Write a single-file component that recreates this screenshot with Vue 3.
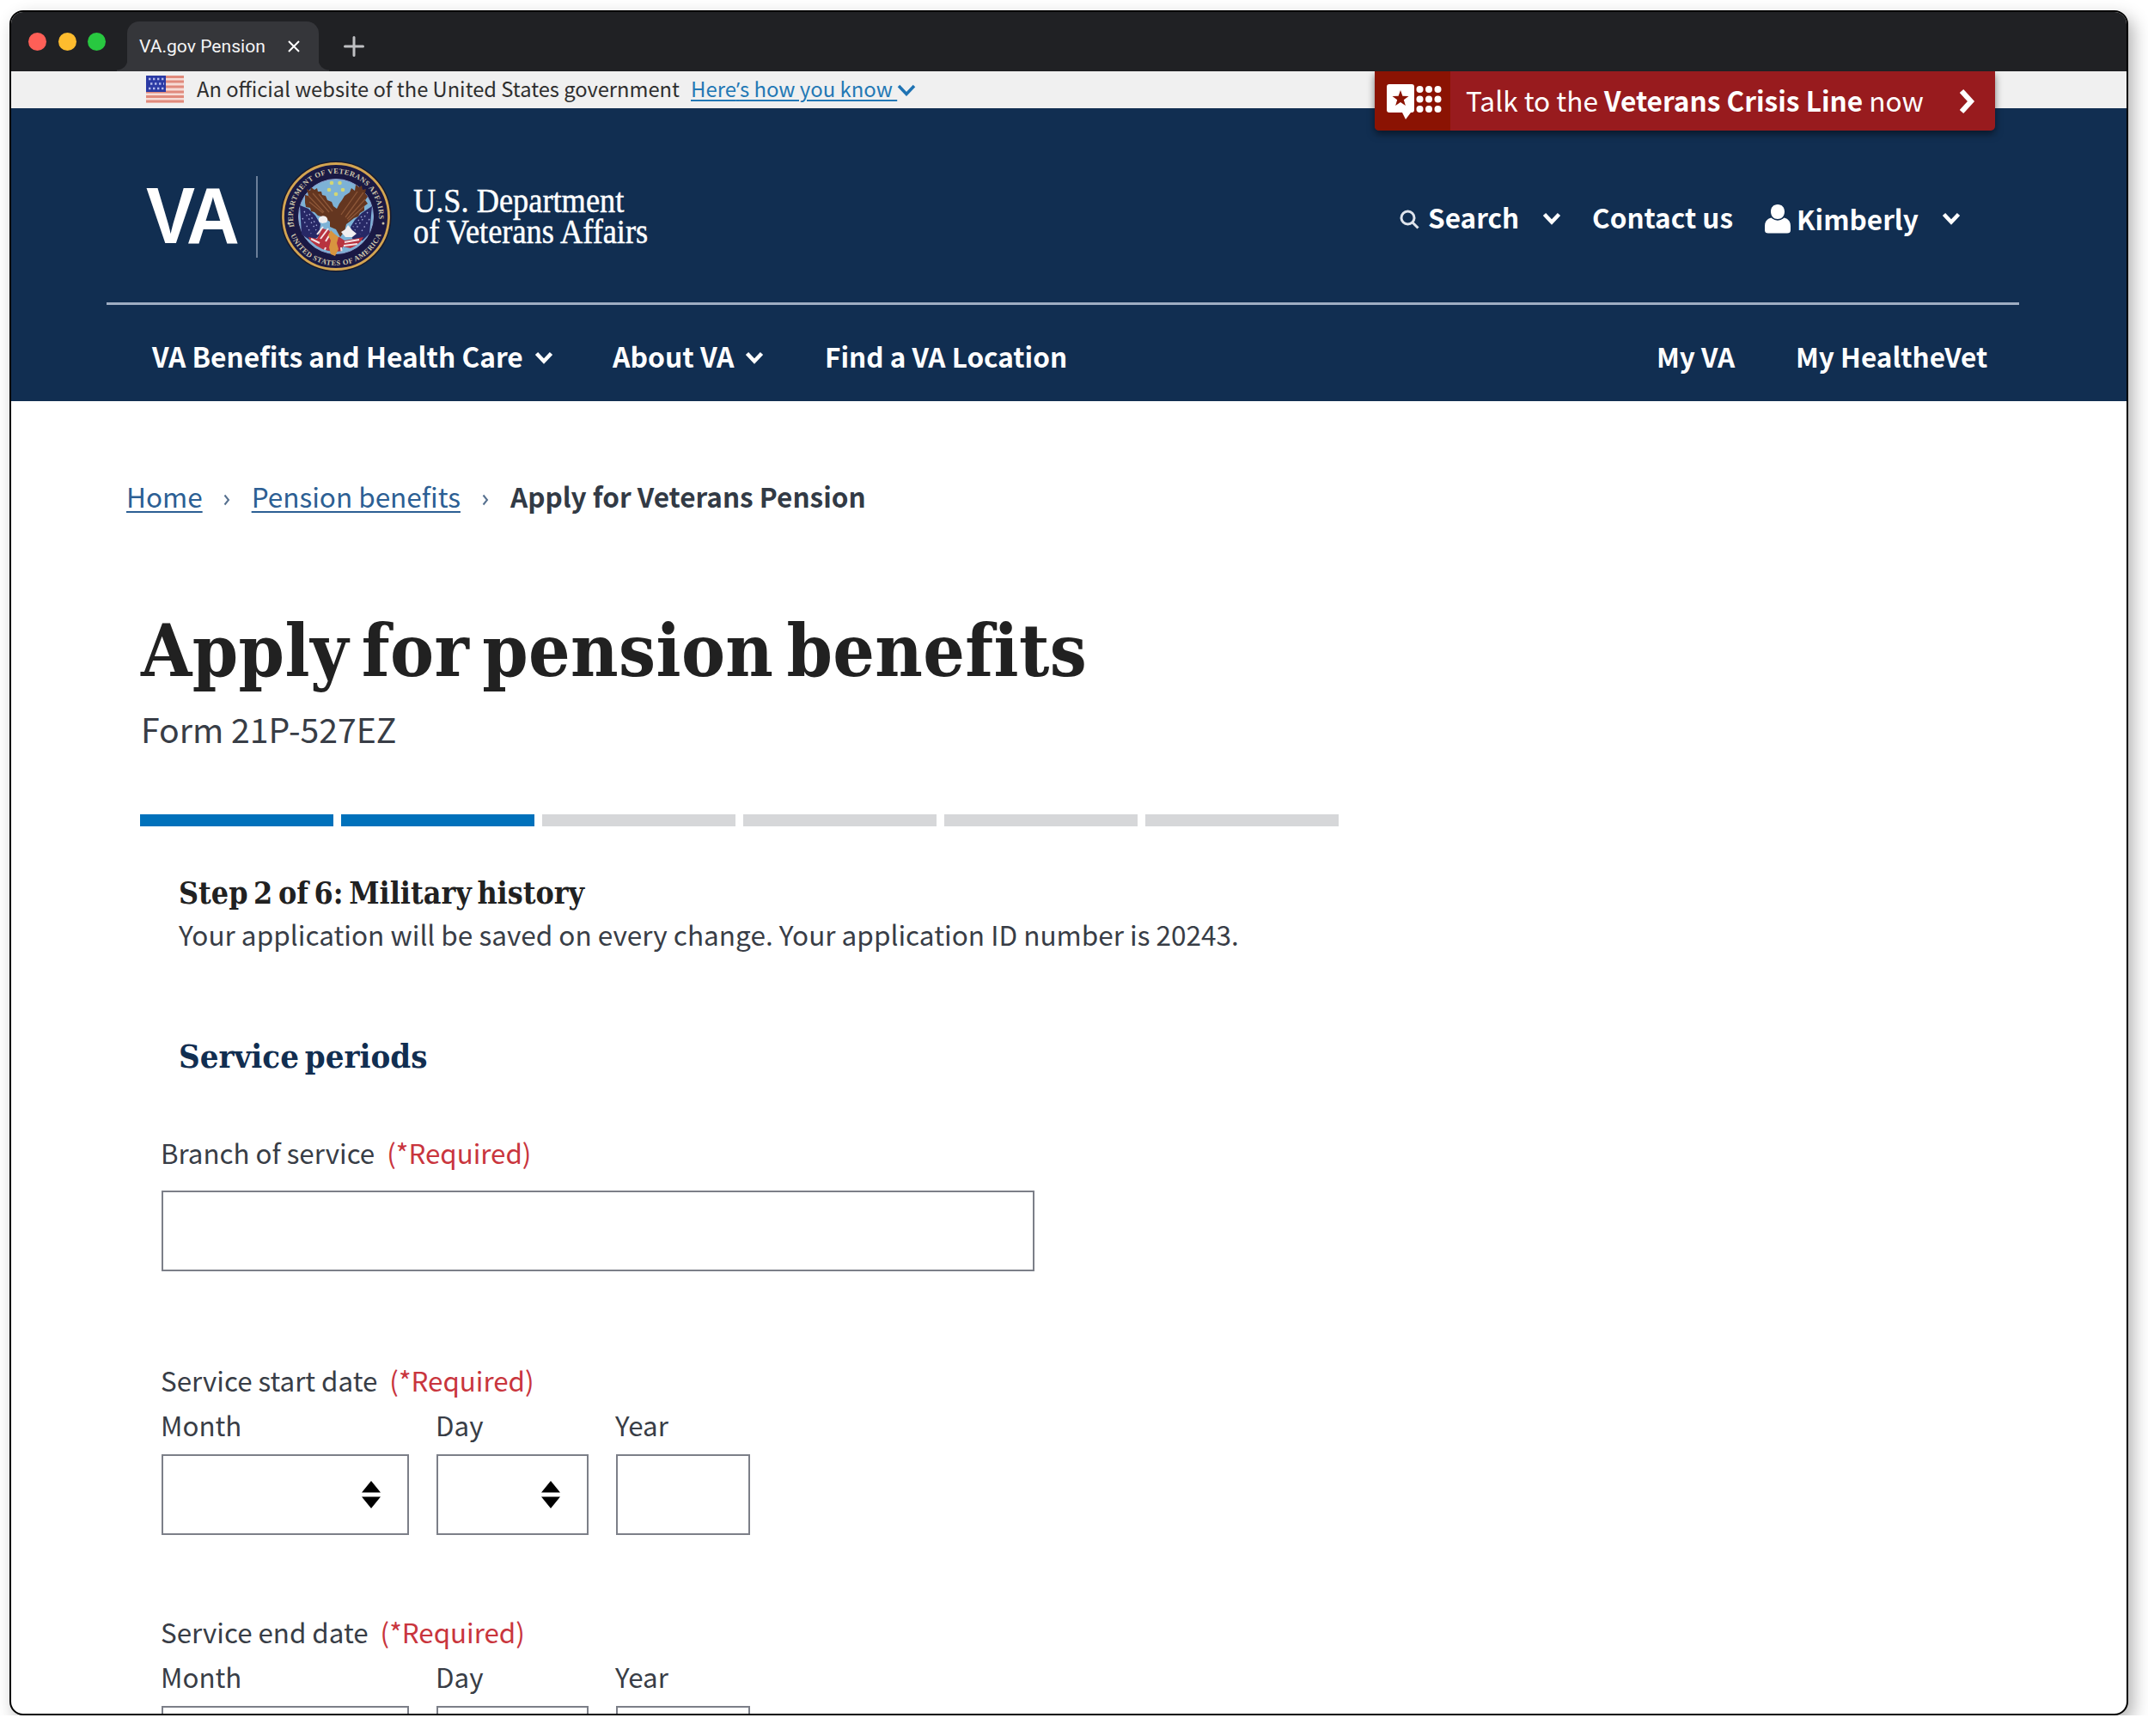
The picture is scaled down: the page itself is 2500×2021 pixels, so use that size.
<script setup>
const steps = [true, true, false, false, false, false]
const dates = ['Service start date', 'Service end date']
</script>

<template>
  <div class="window">
    <div class="tabbar">
      <i class="dot red"></i><i class="dot amber"></i><i class="dot green"></i>
      <div class="tab">
        <span class="tab-title">VA.gov Pension</span>
        <svg class="tab-x" viewBox="0 0 14 14"><path d="M1 1 13 13M13 1 1 13" /></svg>
      </div>
      <svg class="plus" viewBox="0 0 24 24"><path d="M12 1.5v21M1.5 12h21" /></svg>
    </div>

    <div class="gov">
      <svg class="flag" viewBox="0 0 44 32">
        <rect width="44" height="32" fill="#f6dcd6" />
        <path d="M0 1.500h44M0 7h44M0 13h44M0 19h44M0 24.500h44M0 30h44" stroke="#e08a7c" stroke-width="2.800" />
        <rect width="23" height="19" fill="#2b3aa4" />
        <path d="M3 4h18M5 9.500h16M3 15h18" stroke="#b4bbec" stroke-width="2.400" stroke-dasharray="2.400 2.600" />
      </svg>
      <span class="gov-text">An official website of the United States government</span>
      <a class="gov-link">Here<span class="apos">’</span>s how you know </a>
      <svg class="gov-chev" viewBox="0 0 22 14"><path d="M2 2l9 9.500L20 2" /></svg>
    </div>

    <div class="crisis">
      <div class="crisis-icon">
        <svg viewBox="0 0 64 42">
          <path fill="#fff" d="M3 0h26q3 0 3 3v27q0 3-3 3h-1l-6 8-4-8H3q-3 0-3-3V3q0-3 3-3z" />
          <path fill="#8b1303" d="M16 7l2.400 6.800 7.100.1-5.700 4.300 2.100 6.900-5.900-4.100-5.900 4.100 2.100-6.900L6.500 13.900l7.100-.1z" />
          <g fill="#fff">
            <template v-for="y in 3" :key="y">
              <circle v-for="x in 3" :key="x" :cx="28 + x * 10.500" :cy="y * 11.500 - 5.500" r="4" />
            </template>
          </g>
        </svg>
      </div>
      <span class="crisis-text">Talk to the <b>Veterans Crisis Line</b> now</span>
      <svg class="crisis-chev" viewBox="0 0 20 30"><path d="M4 3l11 12L4 27" /></svg>
    </div>

    <header class="header">
      <div class="top">
        <div class="brand">
          <div class="va-box"><span class="va">VA</span></div>
          <i class="rule"></i>
          <svg class="seal" viewBox="-65 -65 130 130">
            <defs>
              <path id="arcTop" d="M-48.500 12A50 50 0 1 1 48.500 12" />
              <path id="arcBottom" d="M-55 15A57 57 0 0 0 55 15" />
              <clipPath id="disc"><circle r="41" /></clipPath>
            </defs>
            <circle r="64.500" fill="#191a2c" />
            <circle r="61.500" fill="#1a1944" stroke="#d3a552" stroke-width="2.800" />
            <circle r="43.500" fill="#7db2d6" stroke="#8c9ccb" stroke-width="1" />
            <text class="ring"><textPath href="#arcTop" textLength="172">DEPARTMENT OF VETERANS AFFAIRS</textPath></text>
            <text class="ring"><textPath href="#arcBottom" startOffset="7" textLength="135">UNITED STATES OF AMERICA</textPath></text>
            <circle cx="-55" cy="8" r="1.500" fill="#c9c2a8" />
            <circle cx="55" cy="8" r="1.500" fill="#c9c2a8" />
            <path fill="#272866" d="M-42-13l10 4 8 8 6 10-2 14-8 6-12-8zM42-12l-12 8-8 8-5 8 2 14 12 2 8-8z" />
            <path d="M-37-6l14 22M-39 2l10 18M-31-3l10 16M37-5L22 16M39 3L28 20M30 0L20 12" stroke="#a4a9d8" stroke-width="1.400" stroke-dasharray="1.500 3.500" />
            <g clip-path="url(#disc)">
              <path fill="#b8333f" d="M-32 24l10 2 6-12 8 2 4 8 8 0 6 4 12-2 10-2-5 9-10 4-9-2-2 7-4 4-2-8-8 8-6-4-1 6-2-6-10-5z" />
              <path d="M-22 21l7-9M-18 26l9-12M-12 29l6-10M-29 26l10 5M10 30l17-3M9 34l16-2M-12 36l-3 8M6 36l1 9" stroke="#f4e4e6" stroke-width="2" />
            </g>
            <path fill="#643620" d="M-36-25l4 1-2-8 4 2 1-4 4 3 3-2 1 4 4 0 1 4 4 1 2 5 5 2 2 5 4 3 3-6 3-4 3-5 6-4 2-5 4 3 1-7 4 3 3-2 1 5 4-1-1 5 3 4-3 4 3 4-4 3 0 5-5 3-2 4-5 2-5 4-4 3-2 8-5 7-5-9-7-3 0-6-5-3-5-3-4-1-4-4-4-1-1-4-5-1-1-5z" />
            <path d="M-32-24l18 19M-27-27l19 22M-31-17l16 13M-20-26L-4-6M32-28L11 1M25-29L6-2M34-20L13 3M33-12L14 5" stroke="#8d5738" stroke-width="1.300" />
            <path fill="#f1eef0" d="M-20 2q3-4 8-2 4 3 1 7l-5 1-4-2zM6 18l5-3 3-5 5 6 5 4-5 4-8 0z" />
            <path fill="#d8943f" d="M-9 22l3-6 4 4 5 4-2 7 2 7-4 8-5-2-2-8 2-8z" />
            <g fill="#d3d674"><circle cx="-5" cy="-39" r="2.300" /><circle cx="4.500" cy="-39" r="2.300" /><circle cx="-8" cy="-31" r="2.300" /><circle cx="8" cy="-31" r="2.300" /><circle cx="0" cy="-26" r="2.300" /></g>
          </svg>
          <div class="dept">
            <div>U.S. Department</div>
            <div>of Veterans Affairs</div>
          </div>
        </div>
        <div class="tools">
          <svg class="glass" viewBox="0 0 23 23"><circle cx="9.500" cy="9.500" r="7.500" /><path d="M15 15l6.500 6.500" /></svg>
          <span class="t-search">Search</span>
          <svg class="chev c1" viewBox="0 0 22 15"><path d="M2.500 2.500l8.500 9 8.500-9" /></svg>
          <span class="t-contact">Contact us</span>
          <svg class="person" viewBox="0 0 30 34"><path d="M15 0c5 0 8 3.500 8 8.500S19.500 17 15 17 7 13.500 7 8.500 10 0 15 0zM7.500 15.500Q15 22 22.500 15.500C27.500 16.500 30 20 30 25v5q0 3.500-4 3.500H4Q0 33.500 0 30v-5c0-5 2.500-8.500 7.500-9.500z" /></svg>
          <span class="t-name">Kimberly</span>
          <svg class="chev c2" viewBox="0 0 22 15"><path d="M2.500 2.500l8.500 9 8.500-9" /></svg>
        </div>
      </div>
      <nav class="nav">
        <span class="n1">VA Benefits and Health Care</span>
        <svg class="chev nc1" viewBox="0 0 22 15"><path d="M2.500 2.500l8.500 9 8.500-9" /></svg>
        <span class="n2">About VA</span>
        <svg class="chev nc2" viewBox="0 0 22 15"><path d="M2.500 2.500l8.500 9 8.500-9" /></svg>
        <span class="n3">Find a VA Location</span>
        <span class="n4">My VA</span>
        <span class="n5">My HealtheVet</span>
      </nav>
    </header>

    <main class="content">
      <div class="crumbs">
        <a>Home</a>
        <svg class="sep" viewBox="0 0 8 14"><path d="M1.500 1.500L6 7l-4.500 5.500" /></svg>
        <a class="b2">Pension benefits</a>
        <svg class="sep" viewBox="0 0 8 14"><path d="M1.500 1.500L6 7l-4.500 5.500" /></svg>
        <b class="b3">Apply for Veterans Pension</b>
      </div>
      <h1>Apply for pension benefits</h1>
      <p class="form-no">Form 21P-527EZ</p>
      <div class="progress"><i v-for="(on, i) in steps" :key="i" :class="{ on }"></i></div>
      <h2 class="step">Step 2 of 6: Military history</h2>
      <p class="saved">Your application will be saved on every change. Your application ID number is 20243.</p>
      <h3 class="section">Service periods</h3>
      <div class="field">
        <div class="label">Branch of service<em>(*Required)</em></div>
        <div class="box wide"></div>
      </div>
      <div v-for="d in dates" :key="d" class="date">
        <div class="label">{{ d }}<em>(*Required)</em></div>
        <div class="parts">
          <div class="part month">
            <div class="label">Month</div>
            <div class="box"><svg class="sort" viewBox="0 0 22 32"><path d="M11 0l11 13.500H0zM11 32l11-13.500H0z" /></svg></div>
          </div>
          <div class="part day">
            <div class="label">Day</div>
            <div class="box"><svg class="sort" viewBox="0 0 22 32"><path d="M11 0l11 13.500H0zM11 32l11-13.500H0z" /></svg></div>
          </div>
          <div class="part year">
            <div class="label">Year</div>
            <div class="box"></div>
          </div>
        </div>
      </div>
    </main>
  </div>
</template>

<style>
body { background: #fff; }
</style>

<style scoped>
* { box-sizing: border-box; }
svg { display: block; flex: none; fill: none; }
.window {
  position: relative;
  width: 2466px;
  height: 1985px;
  margin: 12px 0 0 11px;
  border: 2px solid #000;
  border-radius: 16px;
  overflow: hidden;
  background: #fff;
  box-shadow: 6px 8px 20px rgba(0, 0, 0, .3);
  font-family: "Noto Sans CJK SC", sans-serif;
  font-size: 31.500px;
  line-height: 40px;
  color: #383d46;
  white-space: pre;
}
.tabbar { height: 69px; background: #202124; display: flex; padding-left: 20px; }
.dot { width: 21px; height: 21px; border-radius: 50%; margin: 24px 13.500px 0 0; }
.red { background: #ff5f57; }
.amber { background: #febc2e; }
.green { background: #28c840; }
.tab {
  position: relative; width: 223px; height: 58px; margin: 11px 0 0 11.500px;
  border-radius: 14px 14px 0 0; background: #35363a; display: flex; padding-left: 14px;
}
.tab::before, .tab::after {
  content: ""; position: absolute; bottom: 0; width: 12px; height: 14px;
}
.tab::before { right: 100%; background: radial-gradient(circle at 0 0, transparent 12px, #35363a 13px); }
.tab::after { left: 100%; background: radial-gradient(circle at 100% 0, transparent 12px, #35363a 13px); }
.tab-title { font: 21.100px/30px Roboto, sans-serif; color: #f4f4f5; margin-top: 14px; }
.tab-x { position: absolute; left: 187px; top: 22px; width: 14px; height: 14px; stroke: #fff; stroke-width: 2; }
.plus { width: 24px; height: 24px; margin: 28px 0 0 29px; stroke: #bfc0c3; stroke-width: 3; stroke-linecap: round; }

.gov { height: 43px; background: #f0f0f0; display: flex; padding-left: 157px; }
.flag { width: 44px; height: 32px; margin: 5px 15px 0 0; }
.gov-text { font-size: 23.700px; line-height: 40px; color: #2e2e2e; width: 575px; }
.gov-link { font-size: 23.900px; line-height: 40px; color: #2378b5; width: 240px; text-decoration: underline; text-decoration-thickness: 2px; text-underline-offset: 3px; }
.apos { font-family: "Open Sans", sans-serif; }
.gov-chev { width: 22px; height: 14px; margin-top: 15px; stroke: #1f73b3; stroke-width: 3.500; }

.crisis {
  position: absolute; left: 1587px; top: 69px; width: 722px; height: 69px; display: flex;
  background: #981b1e; border-radius: 0 0 5px 5px; box-shadow: 0 4px 8px rgba(0, 0, 0, .5); z-index: 2;
  clip-path: inset(0 -20px -20px -20px); color: #fff;
}
.crisis-icon { width: 88px; background: #8b1303; border-radius: 0 0 0 5px; padding: 15px 0 0 14px; }
.crisis-icon svg { width: 64px; height: 42px; }
.crisis-text { font-size: 31.600px; line-height: 67px; margin-left: 18px; width: 573px; }
.crisis-chev { width: 20px; height: 30px; margin-top: 20px; stroke: #fff; stroke-width: 6; }

.header { height: 341px; background: #112e51; color: #fff; }
.top { height: 226px; display: flex; justify-content: space-between; }
.brand { display: flex; padding-left: 157px; }
.va-box { width: 128px; }
.va {
  display: inline-block; margin-top: 80px; font: bold 93px/90px "Liberation Sans", Arial, sans-serif;
  letter-spacing: -4px; transform: scaleX(.92); transform-origin: left;
}
.rule { width: 2px; height: 95px; background: #6b7f99; margin: 79px 26px 0 0; }
.seal { width: 130px; height: 130px; margin: 61px 25px 0 0; }
.ring { font: bold 8.500px "Liberation Serif", serif; fill: #cfc8ae; }
.dept {
  font: 39px/36px "Liberation Serif", "Times New Roman", serif; margin-top: 90px;
  transform: scaleX(.932); transform-origin: left; -webkit-text-stroke: .5px #fff;
}
.tools { width: 846px; display: flex; font-weight: bold; padding-top: 106px; }
.glass { width: 23px; height: 23px; margin: 12px 10px 0 0; stroke: #dfe4ec; stroke-width: 3; }
.chev { width: 22px; height: 15px; stroke: #fff; stroke-width: 4.500; margin-top: 15px; }
.t-search { width: 133px; }
.c1 { margin-right: 36px; }
.t-contact { width: 201px; }
.person { width: 30px; height: 34px; fill: #fff; margin: 6px 7px 0 0; }
.t-name { width: 169px; margin-top: 2px; }
.nav {
  height: 115px; margin-left: 111px; width: 2226px; border-top: 3px solid #9fadc2;
  display: flex; padding: 39px 0 0 53px; font-weight: bold;
}
.n1 { width: 445px; font-size: 31.700px; }
.nc1 { margin-right: 69px; }
.n2 { width: 154px; font-size: 31.900px; }
.nc2 { margin-right: 71px; }
.n3 { flex: 1; }
.n4 { width: 162px; }
.n5 { width: 260px; }

.content { padding-left: 150px; }
.crumbs { height: 130px; padding-top: 90px; margin-left: -16px; display: flex; }
.crumbs a { color: #2c5f94; text-decoration: underline; text-decoration-thickness: 2px; text-underline-offset: 4px; }
.b2 { margin: 0 25px; }
.crumbs a:first-child { margin-right: 24px; }
.b3 { margin-left: 25px; color: #323a45; }
.sep { width: 8px; height: 14px; margin-top: 18px; stroke: #56708f; stroke-width: 2; }
h1, h2, h3, p { margin: 0; font-weight: inherit; }
h1, .step, .section { font-family: "DejaVu Serif Condensed", "DejaVu Serif", serif; font-weight: bold; }
h1 { margin: 110px 0 0 1px; height: 100px; font-size: 85px; line-height: 100px; letter-spacing: .4px; word-spacing: -12px; color: #212121; }
.form-no { margin: 16px 0 0 1px; font-size: 39.200px; line-height: 50px; }
.progress { margin-top: 75px; width: 1395px; height: 14px; display: flex; gap: 9px; }
.progress i { flex: 1; background: #d6d7d9; }
.progress i.on { background: #0071bb; }
.step { margin: 56px 0 0 45px; font-size: 35.500px; line-height: 44px; word-spacing: -4.500px; color: #212121; }
.saved { margin: 5px 0 0 45px; font-size: 31.550px; }
.section { margin: 101px 0 0 45px; font-size: 38px; line-height: 44px; word-spacing: -5px; color: #112e51; }
.field { margin: 70px 0 0 25px; }
.label { display: flex; margin-left: -1px; font-size: 31.300px; }
.label em { font-style: normal; color: #c9353d; margin-left: 14px; }
.box { position: relative; height: 94px; border: 2px solid #7c7f88; background: #fff; margin-top: 14px; }
.wide { width: 1016px; margin-top: 24px; }
.date { margin: 107px 0 0 25px; }
.date + .date { margin-top: 93px; }
.parts { display: flex; gap: 32px; margin-top: 12px; }
.month { width: 288px; }
.day { width: 177px; }
.year { width: 156px; }
.sort { position: absolute; right: 31px; top: 29px; width: 22px; height: 32px; fill: #000; }
</style>
